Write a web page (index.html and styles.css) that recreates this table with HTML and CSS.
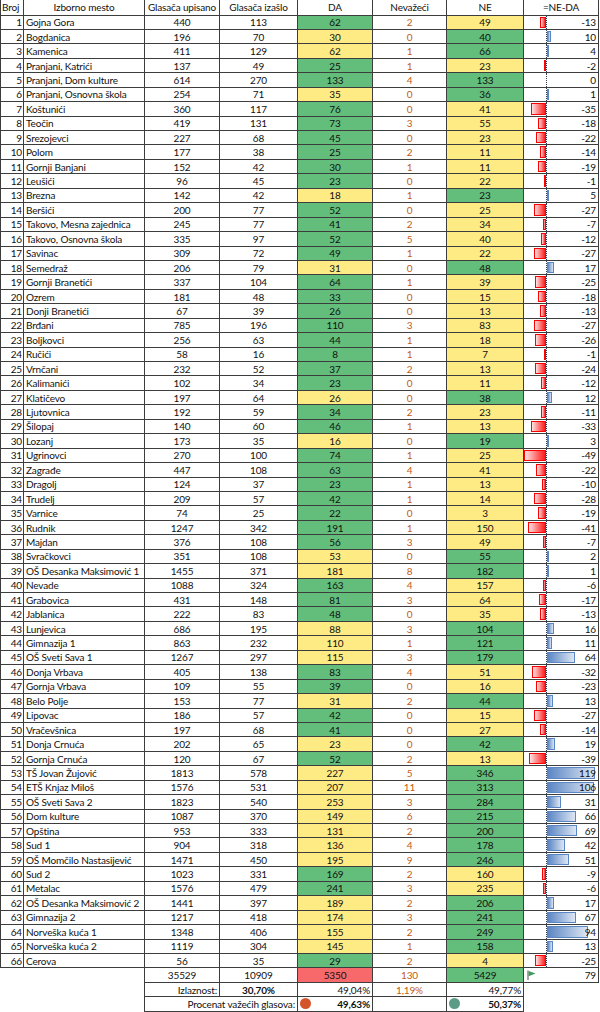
FILE: index.html
```html
<!DOCTYPE html>
<html lang="sr">
<head>
<meta charset="utf-8">
<title>Rezultati po biračkim mestima</title>
<link rel="stylesheet" href="styles.css">
</head>
<body>
<table class="sheet">
<colgroup>
<col class="c-no"><col class="c-name"><col class="c-up"><col class="c-iz"><col class="c-da"><col class="c-inv"><col class="c-ne"><col class="c-diff">
</colgroup>
<thead>
<tr class="head"><th class="left">Broj</th><th>Izborno mesto</th><th>Glasača upisano</th><th>Glasača izašlo</th><th>DA</th><th>Nevažeći</th><th>NE</th><th>=NE-DA</th></tr>
</thead>
<tbody>
<tr><td class="no">1</td><td class="name">Gojna Gora</td><td>440</td><td>113</td><td class="g">62</td><td class="inv">2</td><td class="y">49</td><td class="diff"><i class="bar neg" style="width:5.72px"></i><span class="v">-13</span></td></tr>
<tr><td class="no">2</td><td class="name">Bogdanica</td><td>196</td><td>70</td><td class="y">30</td><td class="inv">0</td><td class="g">40</td><td class="diff"><i class="bar pos" style="width:4.4px"></i><span class="v">10</span></td></tr>
<tr><td class="no">3</td><td class="name">Kamenica</td><td>411</td><td>129</td><td class="y">62</td><td class="inv">1</td><td class="g">66</td><td class="diff"><i class="bar pos" style="width:1.76px"></i><span class="v">4</span></td></tr>
<tr><td class="no">4</td><td class="name">Pranjani, Katrići</td><td>137</td><td>49</td><td class="g">25</td><td class="inv">1</td><td class="y">23</td><td class="diff"><i class="bar neg" style="width:0.88px"></i><span class="v">-2</span></td></tr>
<tr><td class="no">5</td><td class="name">Pranjani, Dom kulture</td><td>614</td><td>270</td><td class="g">133</td><td class="inv">4</td><td class="g">133</td><td class="diff"><span class="v">0</span></td></tr>
<tr><td class="no">6</td><td class="name">Pranjani, Osnovna škola</td><td>254</td><td>71</td><td class="y">35</td><td class="inv">0</td><td class="g">36</td><td class="diff"><i class="bar pos" style="width:0.44px"></i><span class="v">1</span></td></tr>
<tr><td class="no">7</td><td class="name">Koštunići</td><td>360</td><td>117</td><td class="g">76</td><td class="inv">0</td><td class="y">41</td><td class="diff"><i class="bar neg" style="width:15.4px"></i><span class="v">-35</span></td></tr>
<tr><td class="no">8</td><td class="name">Teočin</td><td>419</td><td>131</td><td class="g">73</td><td class="inv">3</td><td class="y">55</td><td class="diff"><i class="bar neg" style="width:7.92px"></i><span class="v">-18</span></td></tr>
<tr><td class="no">9</td><td class="name">Srezojevci</td><td>227</td><td>68</td><td class="g">45</td><td class="inv">0</td><td class="y">23</td><td class="diff"><i class="bar neg" style="width:9.68px"></i><span class="v">-22</span></td></tr>
<tr><td class="no">10</td><td class="name">Polom</td><td>177</td><td>38</td><td class="g">25</td><td class="inv">2</td><td class="y">11</td><td class="diff"><i class="bar neg" style="width:6.16px"></i><span class="v">-14</span></td></tr>
<tr><td class="no">11</td><td class="name">Gornji Banjani</td><td>152</td><td>42</td><td class="g">30</td><td class="inv">1</td><td class="y">11</td><td class="diff"><i class="bar neg" style="width:8.36px"></i><span class="v">-19</span></td></tr>
<tr><td class="no">12</td><td class="name">Leušići</td><td>96</td><td>45</td><td class="g">23</td><td class="inv">0</td><td class="y">22</td><td class="diff"><i class="bar neg" style="width:0.44px"></i><span class="v">-1</span></td></tr>
<tr><td class="no">13</td><td class="name">Brezna</td><td>142</td><td>42</td><td class="y">18</td><td class="inv">1</td><td class="g">23</td><td class="diff"><i class="bar pos" style="width:2.2px"></i><span class="v">5</span></td></tr>
<tr><td class="no">14</td><td class="name">Beršići</td><td>200</td><td>77</td><td class="g">52</td><td class="inv">0</td><td class="y">25</td><td class="diff"><i class="bar neg" style="width:11.88px"></i><span class="v">-27</span></td></tr>
<tr><td class="no">15</td><td class="name">Takovo, Mesna zajednica</td><td>245</td><td>77</td><td class="g">41</td><td class="inv">2</td><td class="y">34</td><td class="diff"><i class="bar neg" style="width:3.08px"></i><span class="v">-7</span></td></tr>
<tr><td class="no">16</td><td class="name">Takovo, Osnovna škola</td><td>335</td><td>97</td><td class="g">52</td><td class="inv">5</td><td class="y">40</td><td class="diff"><i class="bar neg" style="width:5.28px"></i><span class="v">-12</span></td></tr>
<tr><td class="no">17</td><td class="name">Savinac</td><td>309</td><td>72</td><td class="g">49</td><td class="inv">1</td><td class="y">22</td><td class="diff"><i class="bar neg" style="width:11.88px"></i><span class="v">-27</span></td></tr>
<tr><td class="no">18</td><td class="name">Semedraž</td><td>206</td><td>79</td><td class="y">31</td><td class="inv">0</td><td class="g">48</td><td class="diff"><i class="bar pos" style="width:7.48px"></i><span class="v">17</span></td></tr>
<tr><td class="no">19</td><td class="name">Gornji Branetići</td><td>337</td><td>104</td><td class="g">64</td><td class="inv">1</td><td class="y">39</td><td class="diff"><i class="bar neg" style="width:11px"></i><span class="v">-25</span></td></tr>
<tr><td class="no">20</td><td class="name">Ozrem</td><td>181</td><td>48</td><td class="g">33</td><td class="inv">0</td><td class="y">15</td><td class="diff"><i class="bar neg" style="width:7.92px"></i><span class="v">-18</span></td></tr>
<tr><td class="no">21</td><td class="name">Donji Branetići</td><td>67</td><td>39</td><td class="g">26</td><td class="inv">0</td><td class="y">13</td><td class="diff"><i class="bar neg" style="width:5.72px"></i><span class="v">-13</span></td></tr>
<tr><td class="no">22</td><td class="name">Brđani</td><td>785</td><td>196</td><td class="g">110</td><td class="inv">3</td><td class="y">83</td><td class="diff"><i class="bar neg" style="width:11.88px"></i><span class="v">-27</span></td></tr>
<tr><td class="no">23</td><td class="name">Boljkovci</td><td>256</td><td>63</td><td class="g">44</td><td class="inv">1</td><td class="y">18</td><td class="diff"><i class="bar neg" style="width:11.44px"></i><span class="v">-26</span></td></tr>
<tr><td class="no">24</td><td class="name">Ručići</td><td>58</td><td>16</td><td class="g">8</td><td class="inv">1</td><td class="y">7</td><td class="diff"><i class="bar neg" style="width:0.44px"></i><span class="v">-1</span></td></tr>
<tr><td class="no">25</td><td class="name">Vrnčani</td><td>232</td><td>52</td><td class="g">37</td><td class="inv">2</td><td class="y">13</td><td class="diff"><i class="bar neg" style="width:10.56px"></i><span class="v">-24</span></td></tr>
<tr><td class="no">26</td><td class="name">Kalimanići</td><td>102</td><td>34</td><td class="g">23</td><td class="inv">0</td><td class="y">11</td><td class="diff"><i class="bar neg" style="width:5.28px"></i><span class="v">-12</span></td></tr>
<tr><td class="no">27</td><td class="name">Klatičevo</td><td>197</td><td>64</td><td class="y">26</td><td class="inv">0</td><td class="g">38</td><td class="diff"><i class="bar pos" style="width:5.28px"></i><span class="v">12</span></td></tr>
<tr><td class="no">28</td><td class="name">Ljutovnica</td><td>192</td><td>59</td><td class="g">34</td><td class="inv">2</td><td class="y">23</td><td class="diff"><i class="bar neg" style="width:4.84px"></i><span class="v">-11</span></td></tr>
<tr><td class="no">29</td><td class="name">Šilopaj</td><td>140</td><td>60</td><td class="g">46</td><td class="inv">1</td><td class="y">13</td><td class="diff"><i class="bar neg" style="width:14.52px"></i><span class="v">-33</span></td></tr>
<tr><td class="no">30</td><td class="name">Lozanj</td><td>173</td><td>35</td><td class="y">16</td><td class="inv">0</td><td class="g">19</td><td class="diff"><i class="bar pos" style="width:1.32px"></i><span class="v">3</span></td></tr>
<tr><td class="no">31</td><td class="name">Ugrinovci</td><td>270</td><td>100</td><td class="g">74</td><td class="inv">1</td><td class="y">25</td><td class="diff"><i class="bar neg" style="width:21.56px"></i><span class="v">-49</span></td></tr>
<tr><td class="no">32</td><td class="name">Zagrađe</td><td>447</td><td>108</td><td class="g">63</td><td class="inv">4</td><td class="y">41</td><td class="diff"><i class="bar neg" style="width:9.68px"></i><span class="v">-22</span></td></tr>
<tr><td class="no">33</td><td class="name">Dragolj</td><td>124</td><td>37</td><td class="g">23</td><td class="inv">1</td><td class="y">13</td><td class="diff"><i class="bar neg" style="width:4.4px"></i><span class="v">-10</span></td></tr>
<tr><td class="no">34</td><td class="name">Trudelj</td><td>209</td><td>57</td><td class="g">42</td><td class="inv">1</td><td class="y">14</td><td class="diff"><i class="bar neg" style="width:12.32px"></i><span class="v">-28</span></td></tr>
<tr><td class="no">35</td><td class="name">Varnice</td><td>74</td><td>25</td><td class="g">22</td><td class="inv">0</td><td class="y">3</td><td class="diff"><i class="bar neg" style="width:8.36px"></i><span class="v">-19</span></td></tr>
<tr><td class="no">36</td><td class="name">Rudnik</td><td>1247</td><td>342</td><td class="g">191</td><td class="inv">1</td><td class="y">150</td><td class="diff"><i class="bar neg" style="width:18.04px"></i><span class="v">-41</span></td></tr>
<tr><td class="no">37</td><td class="name">Majdan</td><td>376</td><td>108</td><td class="g">56</td><td class="inv">3</td><td class="y">49</td><td class="diff"><i class="bar neg" style="width:3.08px"></i><span class="v">-7</span></td></tr>
<tr><td class="no">38</td><td class="name">Svračkovci</td><td>351</td><td>108</td><td class="y">53</td><td class="inv">0</td><td class="g">55</td><td class="diff"><i class="bar pos" style="width:0.88px"></i><span class="v">2</span></td></tr>
<tr><td class="no">39</td><td class="name">OŠ Desanka Maksimović 1</td><td>1455</td><td>371</td><td class="y">181</td><td class="inv">8</td><td class="g">182</td><td class="diff"><i class="bar pos" style="width:0.44px"></i><span class="v">1</span></td></tr>
<tr><td class="no">40</td><td class="name">Nevade</td><td>1088</td><td>324</td><td class="g">163</td><td class="inv">4</td><td class="y">157</td><td class="diff"><i class="bar neg" style="width:2.64px"></i><span class="v">-6</span></td></tr>
<tr><td class="no">41</td><td class="name">Grabovica</td><td>431</td><td>148</td><td class="g">81</td><td class="inv">3</td><td class="y">64</td><td class="diff"><i class="bar neg" style="width:7.48px"></i><span class="v">-17</span></td></tr>
<tr><td class="no">42</td><td class="name">Jablanica</td><td>222</td><td>83</td><td class="g">48</td><td class="inv">0</td><td class="y">35</td><td class="diff"><i class="bar neg" style="width:5.72px"></i><span class="v">-13</span></td></tr>
<tr><td class="no">43</td><td class="name">Lunjevica</td><td>686</td><td>195</td><td class="y">88</td><td class="inv">3</td><td class="g">104</td><td class="diff"><i class="bar pos" style="width:7.04px"></i><span class="v">16</span></td></tr>
<tr><td class="no">44</td><td class="name">Gimnazija 1</td><td>863</td><td>232</td><td class="y">110</td><td class="inv">1</td><td class="g">121</td><td class="diff"><i class="bar pos" style="width:4.84px"></i><span class="v">11</span></td></tr>
<tr><td class="no">45</td><td class="name">OŠ Sveti Sava 1</td><td>1267</td><td>297</td><td class="y">115</td><td class="inv">3</td><td class="g">179</td><td class="diff"><i class="bar pos" style="width:28.16px"></i><span class="v">64</span></td></tr>
<tr><td class="no">46</td><td class="name">Donja Vrbava</td><td>405</td><td>138</td><td class="g">83</td><td class="inv">4</td><td class="y">51</td><td class="diff"><i class="bar neg" style="width:14.08px"></i><span class="v">-32</span></td></tr>
<tr><td class="no">47</td><td class="name">Gornja Vrbava</td><td>109</td><td>55</td><td class="g">39</td><td class="inv">0</td><td class="y">16</td><td class="diff"><i class="bar neg" style="width:10.12px"></i><span class="v">-23</span></td></tr>
<tr><td class="no">48</td><td class="name">Belo Polje</td><td>153</td><td>77</td><td class="y">31</td><td class="inv">2</td><td class="g">44</td><td class="diff"><i class="bar pos" style="width:5.72px"></i><span class="v">13</span></td></tr>
<tr><td class="no">49</td><td class="name">Lipovac</td><td>186</td><td>57</td><td class="g">42</td><td class="inv">0</td><td class="y">15</td><td class="diff"><i class="bar neg" style="width:11.88px"></i><span class="v">-27</span></td></tr>
<tr><td class="no">50</td><td class="name">Vračevšnica</td><td>197</td><td>68</td><td class="g">41</td><td class="inv">0</td><td class="y">27</td><td class="diff"><i class="bar neg" style="width:6.16px"></i><span class="v">-14</span></td></tr>
<tr><td class="no">51</td><td class="name">Donja Crnuća</td><td>202</td><td>65</td><td class="y">23</td><td class="inv">0</td><td class="g">42</td><td class="diff"><i class="bar pos" style="width:8.36px"></i><span class="v">19</span></td></tr>
<tr><td class="no">52</td><td class="name">Gornja Crnuća</td><td>120</td><td>67</td><td class="g">52</td><td class="inv">2</td><td class="y">13</td><td class="diff"><i class="bar neg" style="width:17.16px"></i><span class="v">-39</span></td></tr>
<tr><td class="no">53</td><td class="name">TŠ Jovan Žujović</td><td>1813</td><td>578</td><td class="y">227</td><td class="inv">5</td><td class="g">346</td><td class="diff"><i class="bar pos" style="width:48px"></i><span class="v">119</span></td></tr>
<tr><td class="no">54</td><td class="name">ETŠ Knjaz Miloš</td><td>1576</td><td>531</td><td class="y">207</td><td class="inv">11</td><td class="g">313</td><td class="diff"><i class="bar pos" style="width:46.64px"></i><span class="v">106</span></td></tr>
<tr><td class="no">55</td><td class="name">OŠ Sveti Sava 2</td><td>1823</td><td>540</td><td class="y">253</td><td class="inv">3</td><td class="g">284</td><td class="diff"><i class="bar pos" style="width:13.64px"></i><span class="v">31</span></td></tr>
<tr><td class="no">56</td><td class="name">Dom kulture</td><td>1087</td><td>370</td><td class="y">149</td><td class="inv">6</td><td class="g">215</td><td class="diff"><i class="bar pos" style="width:29.04px"></i><span class="v">66</span></td></tr>
<tr><td class="no">57</td><td class="name">Opština</td><td>953</td><td>333</td><td class="y">131</td><td class="inv">2</td><td class="g">200</td><td class="diff"><i class="bar pos" style="width:30.36px"></i><span class="v">69</span></td></tr>
<tr><td class="no">58</td><td class="name">Sud 1</td><td>904</td><td>318</td><td class="y">136</td><td class="inv">4</td><td class="g">178</td><td class="diff"><i class="bar pos" style="width:18.48px"></i><span class="v">42</span></td></tr>
<tr><td class="no">59</td><td class="name">OŠ Momčilo Nastasijević</td><td>1471</td><td>450</td><td class="y">195</td><td class="inv">9</td><td class="g">246</td><td class="diff"><i class="bar pos" style="width:22.44px"></i><span class="v">51</span></td></tr>
<tr><td class="no">60</td><td class="name">Sud 2</td><td>1023</td><td>331</td><td class="g">169</td><td class="inv">2</td><td class="y">160</td><td class="diff"><i class="bar neg" style="width:3.96px"></i><span class="v">-9</span></td></tr>
<tr><td class="no">61</td><td class="name">Metalac</td><td>1576</td><td>479</td><td class="g">241</td><td class="inv">3</td><td class="y">235</td><td class="diff"><i class="bar neg" style="width:2.64px"></i><span class="v">-6</span></td></tr>
<tr><td class="no">62</td><td class="name">OŠ Desanka Maksimović 2</td><td>1441</td><td>397</td><td class="y">189</td><td class="inv">2</td><td class="g">206</td><td class="diff"><i class="bar pos" style="width:7.48px"></i><span class="v">17</span></td></tr>
<tr><td class="no">63</td><td class="name">Gimnazija 2</td><td>1217</td><td>418</td><td class="y">174</td><td class="inv">3</td><td class="g">241</td><td class="diff"><i class="bar pos" style="width:29.48px"></i><span class="v">67</span></td></tr>
<tr><td class="no">64</td><td class="name">Norveška kuća 1</td><td>1348</td><td>406</td><td class="y">155</td><td class="inv">2</td><td class="g">249</td><td class="diff"><i class="bar pos" style="width:41.36px"></i><span class="v">94</span></td></tr>
<tr><td class="no">65</td><td class="name">Norveška kuća 2</td><td>1119</td><td>304</td><td class="y">145</td><td class="inv">1</td><td class="g">158</td><td class="diff"><i class="bar pos" style="width:5.72px"></i><span class="v">13</span></td></tr>
<tr><td class="no">66</td><td class="name">Cerova</td><td>56</td><td>35</td><td class="g">29</td><td class="inv">2</td><td class="y">4</td><td class="diff"><i class="bar neg" style="width:11px"></i><span class="v">-25</span></td></tr>
</tbody>
<tfoot>
<tr><td class="blank" colspan="2"></td><td>35529</td><td>10909</td><td class="rd">5350</td><td class="inv">130</td><td class="g">5429</td><td class="diff total"><svg class="flag" viewBox="0 0 9 10" width="9" height="10" aria-hidden="true"><line x1="1" y1="0.5" x2="1" y2="10" stroke="#6b6b6b" stroke-width="1.2"/><path d="M1.6 1 L8.5 3.6 L1.6 6.2 Z" fill="#3f9a5c"/></svg><span class="v">79</span></td></tr>
<tr><td class="blank" colspan="2"></td><td class="right">Izlaznost:</td><td class="bold">30,70%</td><td class="right">49,04%</td><td class="inv">1,19%</td><td class="right">49,77%</td><td class="blank"></td></tr>
<tr><td class="blank" colspan="2"></td><td class="right" colspan="2">Procenat važećih glasova:</td><td class="pct"><div class="pct-row"><span class="dot dot-red"></span><b>49,63%</b></div></td><td></td><td class="pct"><div class="pct-row"><span class="dot dot-teal"></span><b>50,37%</b></div></td><td class="blank"></td></tr>
</tfoot>
</table>
</body>
</html>
```

FILE: styles.css
```css
html, body {
  margin: 0;
  padding: 0;
  background: #ffffff;
}

.sheet {
  border-collapse: collapse;
  table-layout: fixed;
  width: 599px;
  font-family: Lato, "Open Sans", "Liberation Sans", sans-serif;
  font-size: 10px;
  letter-spacing: -0.15px;
  color: #111111;
}

.c-no { width: 23px; }
.c-name { width: 121px; }
.c-up { width: 75px; }
.c-iz { width: 78px; }
.c-da { width: 75px; }
.c-inv { width: 74px; }
.c-ne { width: 77px; }
.c-diff { width: 75px; }

.sheet tr { height: 14.45px; }
.sheet thead tr { height: 15px; }

.sheet th,
.sheet td {
  border: 1px solid #3d3d3d;
  padding: 0 2px;
  line-height: 12px;
  white-space: nowrap;
  overflow: hidden;
  text-align: center;
  font-weight: normal;
}

.sheet th { border-top: none; }
.sheet th.left { text-align: left; padding-left: 1px; }

.sheet td.no { text-align: right; padding-right: 1px; }
.sheet td.name { text-align: left; padding-left: 2px; }
.sheet td.right { text-align: right; }
.sheet td.bold { font-weight: bold; }

.sheet td.g { background: #63be7b; }
.sheet td.y { background: #ffeb84; }
.sheet td.rd { background: #f8696b; }
.sheet td.inv { color: #c55a11; }

.sheet td.blank { border: none; }

.sheet td.diff {
  position: relative;
  text-align: right;
  padding-right: 2px;
}

.sheet td.diff::before {
  content: "";
  position: absolute;
  left: 22px;
  top: 0;
  bottom: 0;
  border-left: 1px dotted #2b3a55;
}

.sheet td.total::before { display: none; }

.diff .v { position: relative; }

.bar {
  position: absolute;
  top: 1px;
  bottom: 1px;
  box-sizing: border-box;
}

.bar.neg {
  right: 52px;
  border: 1px solid #ff0000;
  background: linear-gradient(to left, #ff1a1a, #ffe3e3);
}

.bar.pos {
  left: 23px;
  border: 1px solid #5b86c4;
  background: linear-gradient(to right, #5b86c4, #dde6f3);
}

.flag {
  position: absolute;
  left: 3px;
  top: 2px;
}

.pct { padding: 0 2px 0 1px; }

.pct-row {
  display: flex;
  justify-content: space-between;
  align-items: center;
}

.dot {
  width: 11px;
  height: 11px;
  border-radius: 50%;
}

.dot-red { background: #d5552b; }
.dot-teal { background: #5c9c86; }
```
